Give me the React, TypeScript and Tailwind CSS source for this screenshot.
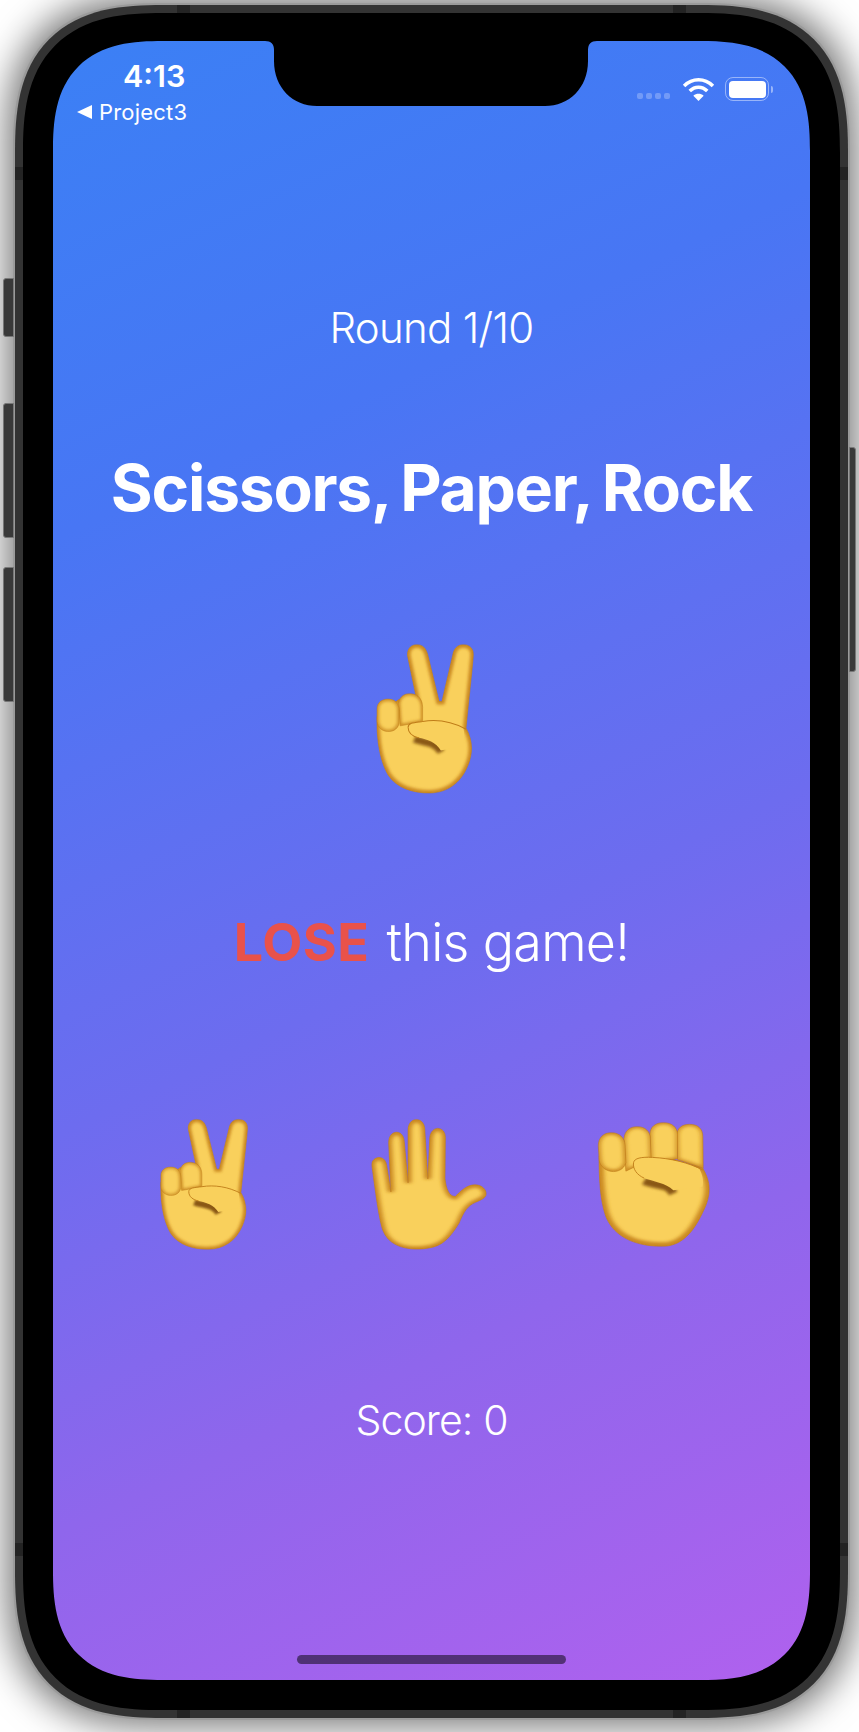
const edge = "#BF7C18";
const base = "#F9D05C";

// filled shape with a soft, darker inner rim, the way the emoji art is shaded
function Soft({ id, d, rim = "#CB8A22", width = 18 }: { id: string; d: string; rim?: string; width?: number }) {
  return (
    <g>
      <clipPath id={id}>
        <path d={d} />
      </clipPath>
      <g clipPath={`url(#${id})`}>
        <path d={d} fill={base} />
        <path d={d} fill="none" stroke={rim} strokeWidth={width} filter="url(#soft-blur)" />
      </g>
      <path d={d} fill="none" stroke={edge} strokeWidth="2" opacity="0.85" />
    </g>
  );
}

function BlurDefs() {
  return (
    <svg className="absolute h-0 w-0">
      <defs>
        <filter id="soft-blur" x="-30%" y="-30%" width="160%" height="160%">
          <feGaussianBlur stdDeviation="5" />
        </filter>
        <filter id="crease-blur" x="-30%" y="-30%" width="160%" height="160%">
          <feGaussianBlur stdDeviation="4" />
        </filter>
      </defs>
    </svg>
  );
}

function PeaceHand({ id, className }: { id: string; className: string }) {
  return (
    <svg viewBox="112 70 290 455" className={className} preserveAspectRatio="none">
      <Soft
        id={`${id}-palm`}
        d="M118 290 C116 350 124 420 150 465 C175 505 225 520 272 519 C320 518 360 490 380 440 C395 405 398 365 376 325 C382 260 392 170 397 110 C399 88 388 75 368 75 C350 75 340 88 337 108 L306 245 L298 245 L265 105 C260 85 250 75 233 75 C215 75 203 90 207 112 L232 235 L180 240 Z"
      />
      <Soft id={`${id}-f2`} d="M180 250 C184 228 200 220 218 222 C238 224 250 240 250 262 L250 305 L185 318 Z" width={10} />
      <Soft id={`${id}-f1`} d="M118 268 C118 248 132 238 150 238 C170 238 182 252 182 272 L182 310 C178 330 160 338 142 334 C126 330 118 316 118 300 Z" rim="#D2962A" width={12} />
      <path d="M226 358 C256 370 286 364 304 396" fill="none" stroke="#7E4C0C" strokeWidth="22" opacity="0.9" filter="url(#crease-blur)" />
      <path
        d="M208 322 C208 308 228 308 250 305 C290 298 335 305 368 324 C372 340 372 360 366 378 L303 392 C290 368 262 358 240 354 C222 350 208 340 208 322 Z"
        fill={base}
      />
      <path d="M208 322 C208 308 228 308 250 305 C290 298 335 305 376 328" fill="none" stroke={edge} strokeWidth="3" />
      <path d="M208 322 C208 340 222 350 240 354" fill="none" stroke={edge} strokeWidth="3" />
    </svg>
  );
}

function OpenHand() {
  return (
    <svg viewBox="608 48 310 410" className="h-[133px] w-[118px]" preserveAspectRatio="none">
      <Soft
        id="open-hand"
        d="M730 452 C690 452 655 435 642 395 C632 360 625 300 613 195 C612 178 622 170 632 170 C645 170 650 182 652 195 L663 276 L657 125 C657 105 665 92 678 92 C690 92 697 105 698 120 L708 248 L708 85 C708 66 717 53 730 53 C743 53 752 66 752 85 L760 236 L765 110 C766 92 775 80 786 80 C798 80 806 92 806 108 L805 235 C808 265 815 290 832 290 C848 272 862 254 884 254 C903 254 914 270 913 283 C912 295 900 300 885 308 C865 318 855 335 842 372 C830 395 815 420 798 433 C780 447 755 452 730 452 Z"
      />
    </svg>
  );
}

function Fist() {
  return (
    <svg viewBox="1192 65 303 380" className="h-[127px] w-[116px]" preserveAspectRatio="none">
      <Soft id="fist-palm" d="M1200 170 C1200 240 1203 300 1216 345 C1232 400 1280 440 1365 440 C1425 440 1455 380 1478 320 C1490 285 1494 250 1470 205 L1300 150 Z" width={24} />
      <Soft id="fist-f4" d="M1403 110 C1403 85 1418 75 1436 75 C1458 75 1471 88 1471 112 L1472 206 L1405 180 Z" width={10} />
      <Soft id="fist-f3" d="M1333 105 C1333 82 1348 70 1368 70 C1390 70 1405 84 1405 106 L1405 178 L1335 190 Z" width={10} />
      <Soft id="fist-f2" d="M1265 118 C1267 94 1280 82 1300 82 C1320 82 1334 96 1334 118 L1336 178 L1270 215 Z" width={10} />
      <Soft id="fist-f1" d="M1198 140 C1198 114 1212 100 1232 100 C1253 100 1267 115 1268 138 L1270 190 C1265 210 1248 218 1232 216 C1212 212 1200 196 1200 175 Z" width={12} />
      <path d="M1318 244 C1350 262 1378 248 1394 282" fill="none" stroke="#7E4C0C" strokeWidth="24" opacity="0.9" filter="url(#crease-blur)" />
      <path
        d="M1290 190 C1292 176 1310 172 1340 174 C1385 176 1430 188 1462 208 C1470 225 1474 245 1470 262 L1394 272 C1375 250 1340 245 1318 236 C1298 226 1288 208 1290 190 Z"
        fill={base}
      />
      <path d="M1290 190 C1292 176 1310 172 1340 174 C1385 176 1435 190 1472 212" fill="none" stroke={edge} strokeWidth="2.5" />
      <path d="M1290 190 C1288 208 1298 226 1318 236" fill="none" stroke={edge} strokeWidth="2.5" />
    </svg>
  );
}

function Wifi() {
  return (
    <svg viewBox="0 0 32 24" className="h-[25px] w-[33px]" fill="none" stroke="white" strokeWidth="3.4">
      <path d="M2 9.5 C10 1.5 22 1.5 30 9.5" />
      <path d="M7.5 14.5 C12.5 9.5 19.5 9.5 24.5 14.5" />
      <path d="M11 19 L16 24 L21 19 C18 16.5 14 16.5 11 19 Z" fill="white" stroke="none" />
    </svg>
  );
}

function AntennaBand({ className }: { className: string }) {
  return <div className={`absolute bg-[#232323] ${className}`} />;
}

export default function App() {
  return (
    <div className="flex h-[1732px] w-[859px] overflow-hidden bg-white pl-[13px] pt-[3px] font-['Inter',sans-serif] text-white">
      <BlurDefs />
      <div className="relative h-[1717px] w-[837px] rounded-[150px] bg-[#9a9a9a] p-[2px] shadow-[0_0_36px_6px_rgba(0,0,0,0.55)] [corner-shape:superellipse(1.4)]">
        {/* side buttons */}
        <div className="absolute -left-[10px] top-[275px] h-[59px] w-[11px] rounded-l-[3px] border border-[#777] bg-[#393939]" />
        <div className="absolute -left-[10px] top-[400px] h-[135px] w-[11px] rounded-l-[3px] border border-[#777] bg-[#393939]" />
        <div className="absolute -left-[10px] top-[564px] h-[135px] w-[11px] rounded-l-[3px] border border-[#777] bg-[#393939]" />
        <div className="absolute -right-[6px] top-[444px] h-[225px] w-[7px] rounded-r-[3px] border border-[#777] bg-[#393939]" />

        <div className="relative h-full w-full rounded-[148px] bg-[#333] p-[8px] [corner-shape:superellipse(1.4)]">
          <AntennaBand className="left-[162px] top-0 h-[8px] w-[13px]" />
          <AntennaBand className="right-[162px] top-0 h-[8px] w-[13px]" />
          <AntennaBand className="bottom-0 left-[162px] h-[8px] w-[13px]" />
          <AntennaBand className="bottom-0 right-[162px] h-[8px] w-[13px]" />
          <AntennaBand className="left-0 top-[162px] h-[13px] w-[8px]" />
          <AntennaBand className="right-0 top-[162px] h-[13px] w-[8px]" />
          <AntennaBand className="bottom-[162px] left-0 h-[13px] w-[8px]" />
          <AntennaBand className="bottom-[162px] right-0 h-[13px] w-[8px]" />

          <div className="h-full w-full rounded-[140px] bg-black pb-[30px] pl-[30px] pr-[30px] pt-[28px] [corner-shape:superellipse(1.4)]">
            <div className="relative flex h-[1639px] w-[757px] flex-col items-center overflow-hidden rounded-[110px] bg-[linear-gradient(155deg,#3b80f5_0%,#4876f4_25%,#6d6cef_55%,#8f66ec_75%,#b061ee_100%)] [corner-shape:superellipse(1.4)]">
              {/* notch */}
              <svg viewBox="0 0 332 65" className="absolute left-[212px] top-0 h-[65px] w-[332px]">
                <path
                  d="M0 0 C6 0 9 3 9 9 L9 20 C9 47 28 65 52 65 L280 65 C304 65 323 47 323 20 L323 9 C323 3 326 0 332 0 Z"
                  fill="black"
                />
              </svg>

              {/* status bar */}
              <div className="flex h-[87px] w-full items-start justify-between pl-[24px] pr-[37px] pt-[17px]">
                <div className="flex flex-col items-start">
                  <span className="ml-[46px] text-[30.5px] leading-[35px] font-semibold">4:13</span>
                  <div className="mt-[7px] flex items-center gap-[7px]">
                    <span className="h-0 w-0 border-y-[7px] border-r-[15px] border-y-transparent border-r-white" />
                    <span className="text-[22px] leading-[24px] tracking-[0.2px]">Project3</span>
                  </div>
                </div>
                <div className="flex items-end pt-[18px]">
                  <div className="mb-[2px] mr-[12px] flex gap-[3px]">
                    <span className="size-[6px] rounded-[2px] bg-white/25" />
                    <span className="size-[6px] rounded-[2px] bg-white/25" />
                    <span className="size-[6px] rounded-[2px] bg-white/25" />
                    <span className="size-[6px] rounded-[2px] bg-white/25" />
                  </div>
                  <Wifi />
                  <div className="ml-[10px] flex items-center">
                    <div className="flex h-[24px] w-[44px] rounded-[8px] border-[1.5px] border-white/45 p-[2.5px]">
                      <div className="flex-1 rounded-[4px] bg-white" />
                    </div>
                    <span className="ml-[2px] h-[7px] w-[2px] rounded-r bg-white/45" />
                  </div>
                </div>
              </div>

              <p className="mt-[177px] text-[42px] leading-[46px] font-[350] tracking-[-0.7px]">Round 1/10</p>
              <h1 className="mt-[96px] text-[64px] leading-[82px] font-bold tracking-[-1.2px] [word-spacing:-3px]">Scissors, Paper, Rock</h1>

              <div className="-ml-[13px] mt-[114px]">
                <PeaceHand id="big" className="h-[152px] w-[100px]" />
              </div>

              <p className="mt-[118px] flex items-center gap-[17px] text-[52px] leading-[60px] font-[350] tracking-[-0.7px]">
                <span className="font-bold tracking-[0.5px] text-[#e9524a]">LOSE</span>
                <span>this game!</span>
              </p>

              <div className="ml-[38px] mt-[144px] flex h-[135px] w-[675px] self-start">
                <div className="flex w-[225px] items-center justify-center">
                  <PeaceHand id="small" className="h-[133px] w-[90px]" />
                </div>
                <div className="flex w-[225px] items-center justify-center">
                  <OpenHand />
                </div>
                <div className="flex w-[225px] items-center justify-center">
                  <Fist />
                </div>
              </div>

              <p className="mt-[145px] text-[41px] leading-[46px] font-[350] tracking-[-0.9px]">Score: 0</p>

              {/* home indicator */}
              <div className="absolute bottom-[16px] left-[244px] h-[9px] w-[269px] rounded-full bg-black/50" />
            </div>
          </div>
        </div>
      </div>
    </div>
  );
}
